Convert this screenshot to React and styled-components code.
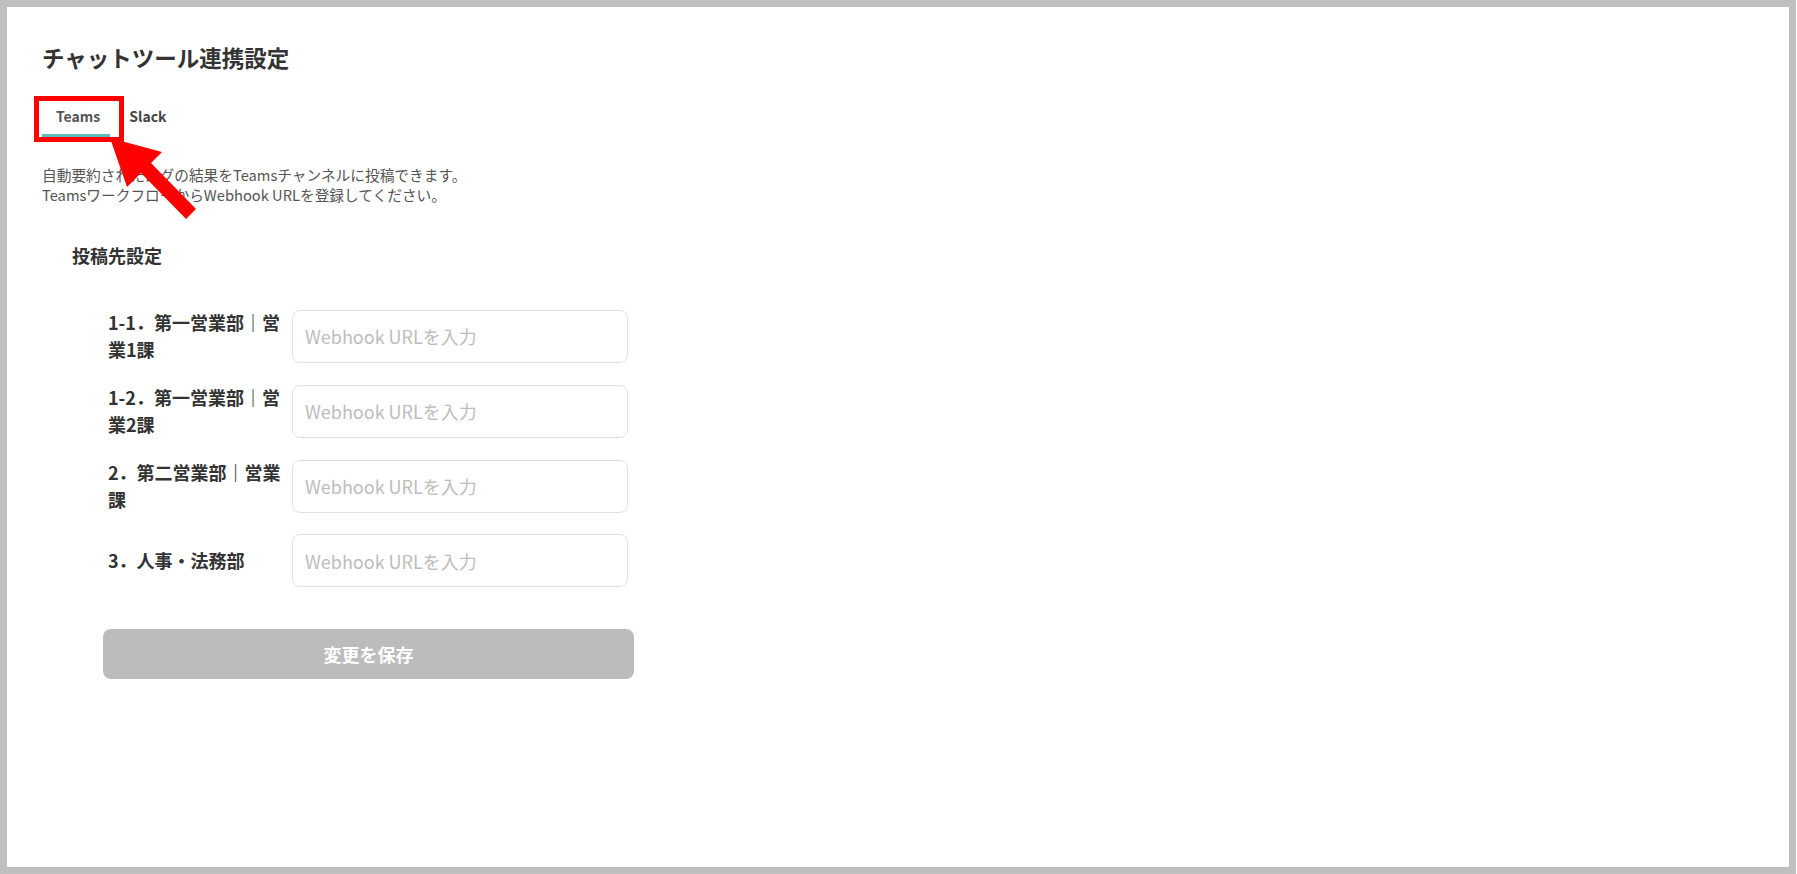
import styled, { createGlobalStyle } from "styled-components";

const GlobalStyle = createGlobalStyle`
	html, body {
		margin: 0;
		padding: 0;
		background: #fff;
	}
	body {
		font-family: "Noto Sans CJK JP", "Noto Sans", sans-serif;
		color: #333;
	}
	* {
		box-sizing: border-box;
	}
`;

const channels = [
	"1-1．第一営業部｜営業1課",
	"1-2．第一営業部｜営業2課",
	"2．第二営業部｜営業課",
	"3．人事・法務部",
];

const App = () => {
	return (
		<Page>
			<GlobalStyle />
			<Frame>
				<Title>チャットツール連携設定</Title>
				<Tabs>
					<Tab $active>Teams</Tab>
					<Tab>Slack</Tab>
				</Tabs>
				<Description>
					自動要約されたログの結果をTeamsチャンネルに投稿できます。
					<br />
					TeamsワークフローからWebhook URLを登録してください。
				</Description>
				<Section>
					<SectionTitle>投稿先設定</SectionTitle>
					<FormBody>
						<Rows>
							{channels.map((name) => (
								<Row key={name}>
									<Label>{name}</Label>
									<Input placeholder="Webhook URLを入力" />
								</Row>
							))}
						</Rows>
						<SaveButton disabled>変更を保存</SaveButton>
					</FormBody>
				</Section>
			</Frame>
			<Annotation width="1797" height="874" viewBox="0 0 1797 874">
				<rect x="36.5" y="98.5" width="85" height="41" fill="none" stroke="#ff0000" strokeWidth="5" />
				<polygon
					points="110,138 162,152 151,163 196,209 186,219 141,173 127,187"
					fill="#ff0000"
				/>
			</Annotation>
		</Page>
	);
};

const Page = styled.div`
	position: relative;
	width: 1797px;
	height: 874px;
	overflow: hidden;
`;

const Frame = styled.div`
	width: 1796px;
	height: 874px;
	border: 7px solid #bfbfbf;
	padding: 34px 35px;
	background: #fff;
`;

const Title = styled.h1`
	margin: 0;
	font-size: 22.5px;
	line-height: 32px;
	font-weight: 700;
	color: #333;
`;

const Tabs = styled.div`
	display: flex;
	gap: 5px;
	margin-top: 24px;
`;

const Tab = styled.div`
	padding: 8px 10px 7px 14px;
	font-size: 14px;
	line-height: 22px;
	font-weight: 700;
	color: ${(p) => (p.$active ? "#555" : "#444")};
	border-bottom: 3px solid ${(p) => (p.$active ? "#5bbdb8" : "transparent")};
	cursor: pointer;
`;

const Description = styled.p`
	margin: 28px 0 0;
	font-size: 14.7px;
	line-height: 20px;
	color: #555;
`;

const Section = styled.section`
	margin-top: 37px;
	padding-left: 30px;
`;

const SectionTitle = styled.h2`
	margin: 0;
	font-size: 18px;
	line-height: 26px;
	font-weight: 700;
	color: #333;
`;

const FormBody = styled.div`
	padding-left: 31px;
	margin-top: 41px;
`;

const Rows = styled.div`
	display: flex;
	flex-direction: column;
	gap: 21px;
	padding-left: 5px;
`;

const Row = styled.div`
	display: grid;
	grid-template-columns: 178px 336px;
	column-gap: 6px;
	align-items: center;
`;

const Label = styled.div`
	font-size: 18px;
	line-height: 27px;
	font-weight: 700;
	color: #333;
`;

const Input = styled.input`
	width: 336px;
	height: 53px;
	padding: 0 12px;
	border: 1.5px solid #e2e2e2;
	border-radius: 8px;
	font-family: inherit;
	font-size: 18px;
	color: #333;
	outline: none;
	&::placeholder {
		color: #bdbdbd;
	}
`;

const SaveButton = styled.button`
	display: block;
	margin-top: 42px;
	width: 531px;
	height: 50px;
	border: none;
	border-radius: 8px;
	background: #bcbcbc;
	color: #fff;
	font-family: inherit;
	font-size: 18px;
	font-weight: 700;
	cursor: not-allowed;
`;

const Annotation = styled.svg`
	position: absolute;
	top: 0;
	left: 0;
	pointer-events: none;
`;

export default App;
